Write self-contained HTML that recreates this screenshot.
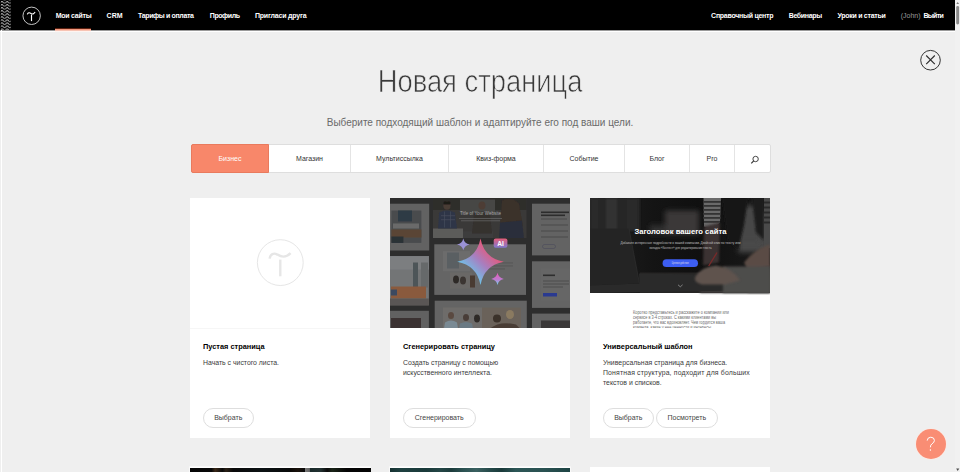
<!DOCTYPE html>
<html><head><meta charset="utf-8">
<style>
*{box-sizing:border-box;margin:0;padding:0}
html,body{width:960px;height:472px;overflow:hidden;background:#efefef;font-family:"Liberation Sans",sans-serif}
.abs{position:absolute}
#hdr{position:absolute;left:0;top:0;width:955px;height:30px;background:#000}
.nav{position:absolute;top:11px;font-size:7px;font-weight:700;color:#fff;white-space:nowrap;line-height:9px}
#title{position:absolute;left:0;width:960px;top:63.6px;text-align:center;font-size:30px;line-height:36px;color:#3a3a3a;-webkit-text-stroke:0.7px #efefef;transform:scale(0.912,1.065);transform-origin:481px 28.4px}
#sub{position:absolute;left:0;width:960px;top:116.5px;text-align:center;font-size:10px;line-height:12px;color:#6a6a6a}
#tabs{position:absolute;left:191px;top:144px;width:580px;height:29px;background:#fff;border:1px solid #dedede;border-radius:2px}
.tab{position:absolute;top:0;height:27px;border-left:1px solid #e4e4e4;font-size:7px;color:#333;text-align:center;line-height:27px}
.card{position:absolute;top:197.7px;width:180px;height:240px;background:#fff;overflow:hidden}
.img{position:absolute;left:0;top:0;width:180px;height:130px;overflow:hidden}
.ct{position:absolute;left:13px;top:341px;font-size:7.4px;font-weight:700;color:#000;white-space:nowrap}
.cd{position:absolute;left:13px;font-size:6.9px;color:#3a3a3a;line-height:9.9px;white-space:nowrap}
.btn{position:absolute;top:210.5px;height:20px;border:1px solid #dedede;border-radius:10px;font-size:7px;color:#444;text-align:center;line-height:18px;white-space:nowrap}
</style></head><body>
<div id="hdr">
  <svg class="abs" style="left:0;top:0" width="11" height="30">
    <defs><pattern id="zz" width="5.3" height="3.05" patternUnits="userSpaceOnUse" x="1.95" y="1.05">
      <path d="M-0.3,0 L1.8,1.8 Q2.65,2.4 3.5,1.8 L5.6,0" stroke="#d0d0d0" stroke-width="0.85" fill="none"/>
    </pattern></defs>
    <rect x="0.8" y="0" width="10" height="30" fill="url(#zz)"/>
  </svg>
  <svg class="abs" style="left:21px;top:5.5px" width="21" height="21" viewBox="0 0 21 21">
    <circle cx="10.65" cy="9.8" r="8.7" stroke="#d8d8d8" stroke-width="0.9" fill="none"/>
    <path d="M6.3,8.4 C7.0,6.3 8.6,6.4 10.0,7.5 C11.5,8.5 13.0,8.0 14.1,6.0" stroke="#fff" stroke-width="1.1" fill="none"/>
    <path d="M10.5,8.6 L10.5,15.1" stroke="#fff" stroke-width="1.15"/>
  </svg>
  <div class="nav" style="left:55.7px;letter-spacing:-0.25px">Мои сайты</div>
  
  <div class="nav" style="left:106.6px">CRM</div>
  <div class="nav" style="left:138px;letter-spacing:-0.37px">Тарифы и оплата</div>
  <div class="nav" style="left:209.8px;letter-spacing:-0.43px">Профиль</div>
  <div class="nav" style="left:254.9px;letter-spacing:-0.18px">Пригласи друга</div>
  <div class="nav" style="left:711.1px;letter-spacing:-0.27px">Справочный центр</div>
  <div class="nav" style="left:788.7px;letter-spacing:-0.34px">Вебинары</div>
  <div class="nav" style="left:837.4px;letter-spacing:-0.27px">Уроки и статьи</div>
  <div class="nav" style="left:900.7px;font-weight:400;color:#999">(John)</div>
  <div class="nav" style="left:923.4px;letter-spacing:-0.68px">Выйти</div>
</div>
<!-- frame lines -->
<div class="abs" style="left:0;top:30px;width:955px;height:1px;background:#9a9a9a"></div><div class="abs" style="left:0;top:31px;width:955px;height:1px;background:#fff"></div>
<div class="abs" style="left:55px;top:28px;width:36px;height:4px;background:linear-gradient(#5a2010 0,#5a2010 1px,#f29a80 1px,#f29a80 2px,#f7c3b3 2px,#f7c3b3 3px,#fff4f0 3px)"></div>
<div class="abs" style="left:1px;top:30px;width:1.2px;height:442px;background:#fff"></div>
<!-- scrollbar -->
<div class="abs" style="left:955px;top:0;width:5px;height:472px;background:#f1f1f1"></div>
<svg class="abs" style="left:955px;top:0" width="5" height="472">
  <path d="M1.3,3.8 L2.7,2.2 L4.1,3.8Z" fill="#505050"/>
  <rect x="1.2" y="6" width="2.9" height="18.5" rx="1.4" fill="#8a8a8a"/>
  <path d="M1.1,468.6 L2.7,471 L4.3,468.6Z" fill="#505050"/>
</svg>
<!-- close -->
<svg class="abs" style="left:918px;top:48px" width="25" height="25" viewBox="0 0 25 25">
  <circle cx="12.5" cy="12.2" r="9.8" stroke="#333" stroke-width="1" fill="none"/>
  <path d="M8.2,7.5 L16.8,16.1 M16.8,7.5 L8.2,16.1" stroke="#2a2a2a" stroke-width="1.1"/>
</svg>
<div id="title">Новая страница</div>
<div id="sub">Выберите подходящий шаблон и адаптируйте его под ваши цели.</div>
<div id="tabs">
  <div class="tab" style="left:77px;width:81px;border-left:none">Магазин</div>
  <div class="tab" style="left:158px;width:98px">Мультиссылка</div>
  <div class="tab" style="left:256px;width:95px">Квиз-форма</div>
  <div class="tab" style="left:351px;width:81px">Событие</div>
  <div class="tab" style="left:432px;width:65px">Блог</div>
  <div class="tab" style="left:497px;width:45px">Pro</div>
  <div class="tab" style="left:542px;width:36px">
    <svg class="abs" style="left:14.5px;top:9.5px" width="10" height="10" viewBox="0 0 10 10">
      <circle cx="5.6" cy="4" r="2.7" stroke="#333" stroke-width="0.9" fill="none"/>
      <path d="M3.7,5.9 L1.3,8.3" stroke="#333" stroke-width="1.2"/>
    </svg>
  </div>
  <div class="tab" style="left:-1px;top:-1px;height:29px;width:78px;background:#f8876a;border:1px solid #e97a5d;border-radius:2px 0 0 2px;color:#fff;line-height:27px">Бизнес</div>
</div>

<!-- card 1 -->
<div class="card" style="left:190px">
  <div class="abs" style="left:0;top:130.3px;width:180px;height:1px;background:#f6f6f6"></div><div class="img">
    <svg class="abs" style="left:64px;top:38px" width="52" height="52" viewBox="0 0 52 52">
      <circle cx="26.3" cy="26.6" r="22.9" stroke="#e6e6e6" stroke-width="1" fill="none"/>
      <path d="M15.6,22.6 C16.4,18.2 19.6,16.4 23.4,18.6 C27.4,21.2 32,21.8 36.6,17.2" stroke="#e6e6e6" stroke-width="2.4" fill="none"/>
      <path d="M26.3,23.6 L26.3,40.3" stroke="#e6e6e6" stroke-width="2.4"/>
    </svg>
  </div>
  <div class="ct" style="top:144.5px">Пустая страница</div>
  <div class="cd" style="top:160.3px">Начать с чистого листа.</div>
  <div class="btn" style="left:13px;width:50.5px">Выбрать</div>
</div>

<!-- card 2 -->
<div class="card" style="left:390px">
  <div class="img" style="background:#2d2d2d;box-shadow:0 0 0 1.3px #fff,0 -1.8px 0 0.4px #fff">
    <svg class="abs" style="left:0;top:0" width="180" height="130" viewBox="390 197.5 180 130">
      <defs>
        <filter id="pb"><feGaussianBlur stdDeviation="0.6"/></filter>
        <linearGradient id="gstar" x1="1" y1="0" x2="0" y2="1">
          <stop offset="0.2" stop-color="#f5506a"/>
          <stop offset="0.5" stop-color="#a77fc0"/>
          <stop offset="0.8" stop-color="#62d2f2"/>
        </linearGradient>
        <linearGradient id="gs2" x1="0" y1="0" x2="0" y2="1">
          <stop offset="0" stop-color="#e85ab8"/>
          <stop offset="0.55" stop-color="#c07ad0"/>
          <stop offset="1" stop-color="#70d8ee"/>
        </linearGradient>
        <linearGradient id="gai" x1="0" y1="0" x2="0" y2="1">
          <stop offset="0" stop-color="#e45e7c"/>
          <stop offset="1" stop-color="#8078d0"/>
        </linearGradient>
      </defs>
      <!-- panel A -->
      <rect x="390" y="203.2" width="39.2" height="46.8" fill="#626262"/>
      <g filter="url(#pb)">
      <rect x="391.4" y="210" width="30" height="32.4" fill="#4a4c4e"/>
      <rect x="398" y="210" width="14" height="11" fill="#2e3a44"/>
      <rect x="393" y="223" width="26" height="5" fill="#6a6a6a"/>
      <rect x="391.4" y="229" width="30" height="8" fill="#5a4434"/>
      <rect x="391.4" y="236" width="12" height="6.4" fill="#2a3036"/>
      </g>
      <!-- panel B photo -->
      <rect x="433" y="197.5" width="93.5" height="40" fill="#3a3938"/>
      <g filter="url(#pb)">
      <rect x="433" y="197.5" width="93.5" height="12" fill="#2e2d2c"/>
      <rect x="460" y="199" width="35" height="14" fill="#474644"/>
      <rect x="433" y="228" width="30" height="9.5" fill="#5c5b5a"/>
      <rect x="463" y="231" width="30" height="6.5" fill="#3e3d3c"/>
      <ellipse cx="447" cy="205" rx="3.6" ry="4.2" fill="#4a3c34"/>
      <path d="M447,201 Q443,200 443.5,204 L450.5,204 Q451,200 447,201Z" fill="#1e1a18"/>
      <path d="M439,212 Q447,208 455,212 L457,228 L438,228Z" fill="#2f3546"/>
      <rect x="441" y="215" width="14" height="0.6" fill="#4a5060"/>
      <rect x="441" y="219" width="14" height="0.6" fill="#4a5060"/>
      <rect x="444" y="211" width="0.6" height="16" fill="#4a5060"/>
      <rect x="450" y="211" width="0.6" height="16" fill="#4a5060"/>
      <ellipse cx="482" cy="205" rx="3.4" ry="4" fill="#4e3e34"/>
      <path d="M474,213 Q482,209 490,213 L492,233 L472,233Z" fill="#34302e"/>
      <path d="M502,200 Q512,196 519,203 L523,226 L500,226Z" fill="#3a3029"/>
      <path d="M500,222 L522,220 L524,237.5 L499,237.5Z" fill="#2c2e3a"/>
      </g>
      <text x="480.5" y="214" font-family="Liberation Sans" font-size="5.2" fill="#a8a8a8" text-anchor="middle" textLength="41" lengthAdjust="spacingAndGlyphs">Title of Your Website</text>
      <rect x="459" y="217.5" width="43" height="0.7" fill="#6a6a6a"/>
      <rect x="461" y="220" width="39" height="0.7" fill="#6a6a6a"/>
      <!-- panel C -->
      <rect x="532" y="203.2" width="40" height="51.7" fill="#636363"/>
      <rect x="541" y="211" width="28" height="1.6" fill="#2c2c2c"/>
      <rect x="541" y="214" width="24" height="1.6" fill="#2c2c2c"/>
      <rect x="541" y="218" width="26" height="1" fill="#4a4a4a"/>
      <rect x="541" y="224" width="27" height="1" fill="#4a4a4a"/>
      <rect x="541" y="230" width="27" height="1" fill="#4a4a4a"/>
      <rect x="541" y="236" width="27" height="1" fill="#4a4a4a"/>
      <rect x="542.5" y="244" width="13" height="4" rx="2" fill="none" stroke="#4a4a5a" stroke-width="0.6"/>
      <!-- panel D -->
      <rect x="434.3" y="243.8" width="91.7" height="50.6" fill="#656565"/>
      <g filter="url(#pb)">
      <rect x="443" y="250.6" width="27" height="20" fill="#6c6c6c"/>
      <rect x="447" y="252" width="12" height="16" fill="#5a5e62"/>
      <rect x="450" y="272" width="22" height="16" fill="#6a6866"/>
      <ellipse cx="456" cy="279" rx="3" ry="4" fill="#2e2a28"/>
      <ellipse cx="463" cy="280" rx="3" ry="4" fill="#3a3430"/>
      <rect x="470" y="275" width="5" height="12" fill="#4a3a30"/>
      </g>
      <rect x="485" y="262" width="28" height="0.9" fill="#555"/>
      <rect x="485" y="265" width="28" height="0.9" fill="#555"/>
      <rect x="485" y="268" width="20" height="0.9" fill="#555"/>
      <!-- panel E sofa -->
      <g filter="url(#pb)">
      <rect x="390" y="255.6" width="38.9" height="49.2" fill="#737576"/>
      <rect x="390" y="255.6" width="38.9" height="13.4" fill="#7c7e80"/>
      <rect x="413" y="262" width="5" height="25" fill="#4e5458"/>
      <rect x="421" y="262" width="7" height="25" fill="#66696b"/>
      <rect x="391" y="286" width="35" height="12" fill="#8a5a3e"/>
      <rect x="391" y="289" width="6" height="6" fill="#3a4a60"/>
      <rect x="390" y="298" width="38.9" height="6.8" fill="#5a5654"/>
      </g>
      <!-- panel F -->
      <rect x="390" y="310.3" width="38.9" height="17.7" fill="#616161"/>
      <rect x="391" y="317.5" width="30" height="10.5" fill="#3a3230" filter="url(#pb)"/>
      <!-- panel G -->
      <rect x="434.7" y="300.2" width="92.1" height="27.8" fill="#646464"/>
      <g filter="url(#pb)">
      <rect x="443" y="307" width="39" height="21" fill="#6e6c6a"/>
      <ellipse cx="451" cy="315" rx="3" ry="3.5" fill="#5a4a40"/>
      <path d="M445,322 Q451,318 457,322 L458,328 L444,328Z" fill="#7a8a94"/>
      <ellipse cx="466" cy="317" rx="3" ry="3.5" fill="#4a3e38"/>
      <path d="M460,323 Q466,320 472,323 L473,328 L459,328Z" fill="#6a7a84"/>
      <ellipse cx="477" cy="318" rx="3" ry="4" fill="#2e2a28"/>
      <rect x="482" y="307" width="39" height="21" fill="#6a625a"/>
      <ellipse cx="497" cy="318" rx="4" ry="4" fill="#3a302a"/>
      <ellipse cx="510" cy="314" rx="4" ry="4.5" fill="#8a7a60"/>
      <path d="M490,328 Q500,320 516,324 L520,328Z" fill="#4a3e36"/>
      </g>
      <!-- panel H -->
      <rect x="532" y="260.8" width="40" height="46.6" fill="#646464"/>
      <rect x="540.4" y="268" width="32" height="32" fill="#666"/>
      <rect x="543" y="274" width="12" height="1.6" fill="#2e2e2e"/>
      <rect x="543" y="280" width="26" height="1" fill="#4c4c4c"/>
      <rect x="543" y="283" width="26" height="1" fill="#4c4c4c"/>
      <rect x="543" y="286" width="20" height="1" fill="#4c4c4c"/>
      <rect x="543" y="292.5" width="14" height="3.5" fill="#2a3a90"/>
      <!-- panel I -->
      <rect x="532" y="313.1" width="40" height="15" fill="#636363"/>
      <rect x="541" y="320" width="31" height="8" fill="#3a3838"/>
      <!-- stars -->
      <path d="M480.5,238.1 Q484.2,257.6 503.8,261.3 Q484.2,265 480.5,284.5 Q476.8,265 457.2,261.3 Q476.8,257.6 480.5,238.1Z" fill="url(#gstar)"/>
      <path d="M463.3,238.1 Q464.3,243 469.6,244 Q464.3,245 463.3,249.8 Q462.3,245 457,244 Q462.3,243 463.3,238.1Z" fill="#9a92d6"/>
      <path d="M497.5,272.3 Q498.5,277.4 503.8,278.4 Q498.5,279.4 497.5,284.5 Q496.5,279.4 491.2,278.4 Q496.5,277.4 497.5,272.3Z" fill="url(#gs2)"/>
      <rect x="493.7" y="238.1" width="13.7" height="9.2" rx="2" fill="url(#gai)"/>
      <text x="500.55" y="245.4" font-family="Liberation Sans" font-weight="700" font-size="6.6" fill="#fff" text-anchor="middle">AI</text>
    </svg>
  </div>
  <div class="ct" style="top:144.5px">Сгенерировать страницу</div>
  <div class="cd" style="top:160.3px">Создать страницу с помощью<br>искусственного интеллекта.</div>
  <div class="btn" style="left:13px;width:72.5px">Сгенерировать</div>
</div>

<!-- card 3 -->
<div class="card" style="left:590px">
  <div class="img" style="background:#fff;box-shadow:0 0 0 1.3px #fff,0 -1.8px 0 0.4px #fff">
    <svg class="abs" style="left:0;top:0" width="180" height="130" viewBox="590 197.5 180 130">
      <defs>
        <linearGradient id="hero" x1="0" y1="0" x2="1" y2="0">
          <stop offset="0" stop-color="#202020"/>
          <stop offset="0.35" stop-color="#141414"/>
          <stop offset="0.6" stop-color="#101010"/>
          <stop offset="1" stop-color="#1a1a1a"/>
        </linearGradient>
        <filter id="bl" x="-20%" y="-20%" width="140%" height="140%"><feGaussianBlur stdDeviation="2.5"/></filter>
        <filter id="bl1"><feGaussianBlur stdDeviation="0.8"/></filter>
      </defs>
      <rect x="590" y="197.5" width="180" height="95" fill="url(#hero)"/>
      <!-- blinds top-left -->
      <g filter="url(#bl1)">
      <rect x="590" y="197.5" width="50" height="33" fill="#262626"/>
      <rect x="590" y="197.5" width="8" height="33" fill="#2c2c2c"/>
      <rect x="606" y="197.5" width="11" height="33" fill="#303030"/>
      <rect x="627" y="197.5" width="10" height="33" fill="#2b2b2b"/>
      </g>
      <!-- background blurry objects -->
      <g filter="url(#bl)">
        <rect x="665" y="210" width="34" height="24" fill="#3a3937"/>
        <rect x="650" y="224" width="16" height="10" fill="#2e2e2e"/>
        <rect x="738" y="212" width="30" height="40" fill="#484848"/>
      </g>
      <!-- table -->
      <rect x="640" y="272" width="130" height="20.5" fill="#262524"/>
      <rect x="700" y="276" width="70" height="16.5" fill="#3c3b3a" filter="url(#bl1)"/>
      <rect x="748" y="265" width="22" height="27" fill="#4e4d4b" filter="url(#bl1)"/>
      <!-- laptop -->
      <path d="M590,228 L629,228 L639.5,283 L590,285Z" fill="#242424"/><path d="M629,228 L639.5,283" stroke="#333" stroke-width="0.6"/>
      <path d="M639,273 L700,274 L740,290 L590,292.5 L590,285 L639.5,283Z" fill="#2a2a2a"/>
      <!-- right wall light -->
      <rect x="738" y="205" width="22" height="36" fill="#464646" filter="url(#bl)"/>
      <!-- body right -->
      <path d="M722,197.5 L748,197.5 L744,225 L738,250 L728,240 Z" fill="#181818" filter="url(#bl1)"/><path d="M752,197.5 L764,197.5 L764,240 L756,232Z" fill="#1e1e1e" filter="url(#bl1)"/>
      <rect x="764" y="197.5" width="6" height="50" fill="#4a4a4a"/>
      <g fill="#2a2a2a"><rect x="764" y="201" width="6" height="2"/><rect x="764" y="206" width="6" height="2"/><rect x="764" y="211" width="6" height="2"/><rect x="764" y="216" width="6" height="2"/><rect x="764" y="221" width="6" height="2"/></g>
      <!-- right arm skin -->
      <path d="M744,262 Q755,248 770,244 L770,266 L748,270Z" fill="#5a4c45" filter="url(#bl1)"/>
      <!-- striped sleeve -->
      <path d="M703.5,197.5 L721,197.5 L720,222 Q712,230 704,226 Z" fill="#6a6a6a"/>
      <g fill="#333" clip-path="none">
        <rect x="703" y="200.5" width="18" height="1.8"/><rect x="703" y="204.5" width="18" height="1.8"/>
        <rect x="703" y="208.5" width="18" height="1.8"/><rect x="703" y="212.5" width="18" height="1.8"/>
        <rect x="703" y="216.5" width="18" height="1.8"/><rect x="704" y="220.5" width="16" height="1.8"/>
      </g>
      <!-- forearm -->
      <path d="M704,226 L720,222 L719,262 L703,265Z" fill="#3a3230" filter="url(#bl1)"/>
      <!-- table objects -->
      <rect x="723" y="266" width="47" height="26.5" fill="#4e4d4c" filter="url(#bl1)"/>
      <!-- hand -->
      <path d="M695,277 Q701,266 716,265 Q732,267 740,280 L725,284 L702,284 Q694,282 695,277Z" fill="#5e534d" filter="url(#bl1)"/>
      <path d="M717,252 L708.7,265.5" stroke="#7a2a2a" stroke-width="1.3"/>
      <!-- text -->
      <text x="680.4" y="233.5" font-family="Liberation Sans" font-weight="700" font-size="7.6" fill="#fff" text-anchor="middle" textLength="92" lengthAdjust="spacingAndGlyphs">Заголовок вашего сайта</text>
      <text x="680.5" y="243.8" font-family="Liberation Sans" font-size="3.4" fill="#c0c0c0" text-anchor="middle" textLength="120" lengthAdjust="spacingAndGlyphs">Добавьте интересные подробности о вашей компании. Двойной клик по тексту или</text>
      <text x="680.5" y="248.6" font-family="Liberation Sans" font-size="3.4" fill="#c0c0c0" text-anchor="middle" textLength="62" lengthAdjust="spacingAndGlyphs">вкладка «Контент» для редактирования текста</text>
      <rect x="662.6" y="258.8" width="35.4" height="7.7" rx="3.85" fill="#3d5ef2"/>
      <text x="680.3" y="263.6" font-family="Liberation Sans" font-size="2.6" fill="#dde" text-anchor="middle" textLength="17" lengthAdjust="spacingAndGlyphs">Целевое действие</text>
      <path d="M678,284.3 L680.3,286.3 L682.6,284.3" stroke="#bbb" stroke-width="0.6" fill="none"/>
      <!-- body text -->
      <g font-family="Liberation Sans" font-size="4.5" fill="#6a6a6a">
        <text x="633" y="313.6" textLength="96" lengthAdjust="spacingAndGlyphs">Коротко представьтесь и расскажите о компании или</text>
        <text x="633" y="318.6" textLength="83" lengthAdjust="spacingAndGlyphs">сервисе в 3-4 строках. С какими клиентами вы</text>
        <text x="633" y="323.6" textLength="92" lengthAdjust="spacingAndGlyphs">работаете, что вас вдохновляет. Чем гордится ваша</text>
        <text x="633" y="328.6" textLength="78" lengthAdjust="spacingAndGlyphs">команда, какие у нее ценности и интересы</text>
      </g>
    </svg>
  </div>
  <div class="ct" style="top:144.5px">Универсальный шаблон</div>
  <div class="cd" style="top:160.3px">Универсальная страница для бизнеса.<br><span style="letter-spacing:0.15px">Понятная структура, подходит для больших</span><br>текстов и списков.</div>
  <div class="btn" style="left:13px;width:50.5px">Выбрать</div>
  <div class="btn" style="left:66px;width:61.5px">Посмотреть</div>
</div>

<!-- row 2 -->
<div class="abs" style="left:190px;top:466.6px;width:180.3px;height:6px;background:#fff;box-shadow:0 0 0 0.6px #fff"><div class="abs" style="left:0.2px;top:1.2px;width:180px;height:5px;background:linear-gradient(90deg,#060606 0%,#080808 12%,#3a2818 14%,#0a0a0a 18%,#2a2016 20%,#0a0a0a 24%,#0c1214 40%,#080808 60%,#0e1414 64%,#0a0a0a 72%,#2a2018 76%,#0a0a0a 82%,#101010 100%)"></div></div>
<div class="abs" style="left:290px;top:467.8px;width:80.5px;height:5px;background:linear-gradient(90deg,#0a0806 0%,#1a120c 10%,#0a0a0a 18%,#777 19%,#666 24%,#1a2a2a 25%,#223030 38%,#0c0c0c 46%,#1a2418 52%,#050505 70%,#040404 100%)"></div>
<div class="abs" style="left:390px;top:466.6px;width:180.3px;height:6px;background:#fff;box-shadow:0 0 0 0.6px #fff"><div class="abs" style="left:0.2px;top:1.2px;width:180px;height:5px;background:linear-gradient(90deg,#163232 0%,#1e4040 6%,#1a3a3a 20%,#244646 28%,#1c3c3c 34%,#2a5050 40%,#3a6060 48%,#244848 56%,#1a3a3a 62%,#2c5656 70%,#2a5252 85%,#1e4444 100%)"></div></div>
<div class="abs" style="left:590px;top:466.6px;width:180.3px;height:6px;background:#fff"></div>

<!-- help -->
<div class="abs" style="left:916px;top:428.5px;width:30px;height:30px;border-radius:50%;background:#f98d74;box-shadow:0 0 0 0.6px #ffe9e2"></div>
<svg class="abs" style="left:916px;top:428.5px" width="30" height="30" viewBox="0 0 30 30">
  <path d="M11.2,11.6 Q11.4,8.3 14.8,8.2 Q18.4,8.3 18.4,11.4 Q18.3,13.6 16,14.8 Q14.4,15.8 14.4,18.3" stroke="#fff" stroke-width="1" fill="none"/>
  <circle cx="14.4" cy="21" r="0.7" fill="#fff"/>
</svg>
</body></html>
